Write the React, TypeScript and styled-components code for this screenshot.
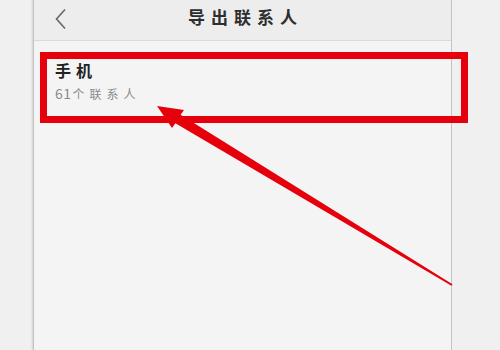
import React from "react";
import styled, { createGlobalStyle } from "styled-components";

const Global = createGlobalStyle`
  html, body { margin: 0; padding: 0; }
  body { width: 500px; height: 350px; overflow: hidden; background: #efefef; font-family: "Noto Sans CJK SC", "Noto Sans", sans-serif; }
`;

const Page = styled.div`
  position: relative;
  width: 500px;
  height: 350px;
  display: flex;
  background: #efefef;
`;

const Margin = styled.div<{ $w: number }>`
  width: ${(p) => p.$w}px;
  flex: none;
  background: #f0f0f0;
`;

const Phone = styled.div`
  flex: 1;
  display: flex;
  flex-direction: column;
  background: #f4f4f4;
  border-left: 1px solid #c4c4c4;
  border-right: 1px solid #c4c4c4;
  box-shadow: -1px 0 2px rgba(0,0,0,0.12), 1px 0 2px rgba(0,0,0,0.12);
`;

const Header = styled.div`
  height: 40px;
  flex: none;
  position: relative;
  display: flex;
  align-items: center;
  justify-content: center;
  background: #ededed;
  border-bottom: 1px solid #dadada;
`;

const Back = styled.div`
  position: absolute;
  left: 20px;
  top: 8px;
  width: 14px;
  height: 22px;
  display: flex;
`;

const Title = styled.div`
  font-size: 17px;
  font-weight: 700;
  color: #2e2e2e;
  letter-spacing: 6px;
  margin-left: 6px;
  margin-top: -7px;
`;

const Item = styled.div`
  padding: 17px 0 0 21px;
  display: flex;
  flex-direction: column;
  gap: 1px;
`;

const Name = styled.div`
  font-size: 16px;
  font-weight: 700;
  color: #222;
  letter-spacing: 5px;
  line-height: 24px;
`;

const Count = styled.div`
  font-size: 12px;
  color: #8a8a8a;
  line-height: 21px;
  height: 21px;
  display: flex;
  align-items: center;
`;

const Num = styled.span`
  font-size: 14px;
  line-height: 21px;
  letter-spacing: 0.5px;
  margin-right: 1px;
`;

const Unit = styled.span`
  letter-spacing: 5px;
  line-height: 21px;
`;

const Highlight = styled.div`
  position: absolute;
  left: 40px;
  top: 52px;
  width: 428px;
  height: 71px;
  box-sizing: border-box;
  border: 7px solid #e5000c;
  pointer-events: none;
`;

const Overlay = styled.svg`
  position: absolute;
  left: 0;
  top: 0;
  pointer-events: none;
`;

export default function App() {
  return (
    <>
      <Global />
      <Page>
        <Margin $w={33} />
        <Phone>
          <Header>
            <Back>
              <svg width="14" height="22" viewBox="0 0 14 22">
                <path d="M11 1.5 L2.5 11 L11 20.5" fill="none" stroke="#666" strokeWidth="1.6" />
              </svg>
            </Back>
            <Title>导出联系人</Title>
          </Header>
          <Item>
            <Name>手机</Name>
            <Count>
              <Num>61</Num>
              <Unit>个联系人</Unit>
            </Count>
          </Item>
        </Phone>
        <Margin $w={48} />
        <Highlight />
        <Overlay width="500" height="350" viewBox="0 0 500 350">
          <polygon
            points="157,106 184,110 180.6,114.7 452.5,284.3 451.5,285.7 175.4,123.3 172,128"
            fill="#e5000c"
          />
        </Overlay>
      </Page>
    </>
  );
}
